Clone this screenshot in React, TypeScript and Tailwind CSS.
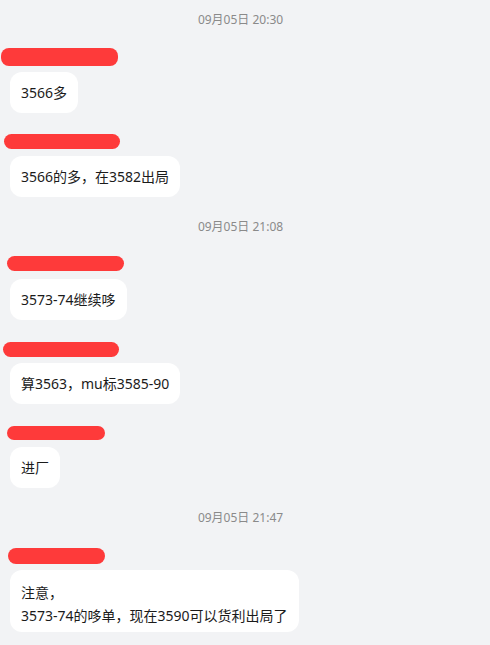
const font = { fontFamily: '"Noto Sans", "Noto Sans CJK SC", sans-serif' };

function Stamp({ text, className }: { text: string; className: string }) {
  return (
    <div className={`flex justify-center pr-[9px] text-[12px] leading-4 text-[#8a8a8a] ${className}`}>
      {text}
    </div>
  );
}

type Msg = {
  barClass: string;
  gapClass: string;
  lines: string[];
  topClass: string;
};

function Message({ m }: { m: Msg }) {
  const multi = m.lines.length > 1;
  return (
    <div className={`flex flex-col ${m.topClass}`}>
      <div className={`rounded-lg bg-[#fe3a3a] ${m.barClass}`} />
      <div
        className={`ml-[10px] flex w-fit flex-col rounded-xl bg-white px-[11px] text-[14px] leading-[21px] text-[#1b1b1b] ${
          multi ? "gap-[2px] pt-[12px] pb-[6px]" : "py-[10px]"
        } ${m.gapClass}`}
      >
        {m.lines.map((l) => (
          <div key={l}>{l}</div>
        ))}
      </div>
    </div>
  );
}

export default function App() {
  return (
    <div className="h-[645px] w-[490px] overflow-hidden bg-[#f2f3f5] pt-[12px]" style={font}>
      <Stamp text="09月05日 20:30" className="" />
      <Message
        m={{ topClass: "mt-[20px]", barClass: "ml-[1px] h-[18px] w-[117px]", gapClass: "mt-[6px]", lines: ["3566多"] }}
      />
      <Message
        m={{
          topClass: "mt-[21px]",
          barClass: "ml-[4px] h-[15px] w-[116px]",
          gapClass: "mt-[7px]",
          lines: ["3566的多，在3582出局"],
        }}
      />
      <Stamp text="09月05日 21:08" className="mt-[22px]" />
      <Message
        m={{
          topClass: "mt-[21px]",
          barClass: "ml-[7px] h-[15px] w-[117px]",
          gapClass: "mt-[8px]",
          lines: ["3573-74继续哆"],
        }}
      />
      <Message
        m={{
          topClass: "mt-[22px]",
          barClass: "ml-[3px] h-[15px] w-[116px]",
          gapClass: "mt-[6px]",
          lines: ["算3563，mu标3585-90"],
        }}
      />
      <Message
        m={{ topClass: "mt-[22px]", barClass: "ml-[7px] h-[14px] w-[98px]", gapClass: "mt-[7px]", lines: ["进厂"] }}
      />
      <Stamp text="09月05日 21:47" className="mt-[22px]" />
      <Message
        m={{
          topClass: "mt-[22px]",
          barClass: "ml-[8px] h-[16px] w-[97px]",
          gapClass: "mt-[6px]",
          lines: ["注意，", "3573-74的哆单，现在3590可以货利出局了"],
        }}
      />
    </div>
  );
}
